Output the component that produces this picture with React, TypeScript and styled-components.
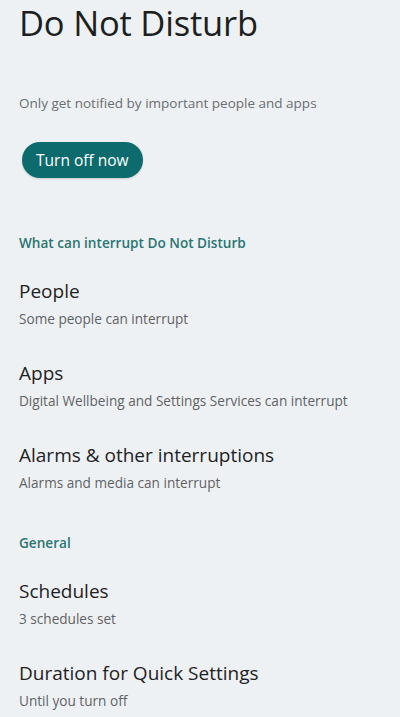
import React from 'react'
import styled, { createGlobalStyle } from 'styled-components'

const GlobalStyle = createGlobalStyle`
  html, body {
    margin: 0;
    padding: 0;
    background: #eef1f3;
  }
  body {
    font-family: "Open Sans", "Noto Sans", sans-serif;
  }
`

type Item = { title: string; summary: string }

const interruptItems: Item[] = [
  { title: 'People', summary: 'Some people can interrupt' },
  { title: 'Apps', summary: 'Digital Wellbeing and Settings Services can interrupt' },
  { title: 'Alarms & other interruptions', summary: 'Alarms and media can interrupt' },
]

const generalItems: Item[] = [
  { title: 'Schedules', summary: '3 schedules set' },
  { title: 'Duration for Quick Settings', summary: 'Until you turn off' },
]

export default function App() {
  return (
    <>
      <GlobalStyle />
      <Page>
        <Title>Do Not Disturb</Title>
        <Intro>Only get notified by important people and apps</Intro>
        <ButtonRow>
          <TurnOffButton>Turn off now</TurnOffButton>
        </ButtonRow>

        <Category $gap={56}>What can interrupt Do Not Disturb</Category>
        {interruptItems.map((item) => (
          <Preference key={item.title}>
            <PrefTitle>{item.title}</PrefTitle>
            <PrefSummary>{item.summary}</PrefSummary>
          </Preference>
        ))}

        <Category $gap={36}>General</Category>
        {generalItems.map((item) => (
          <Preference key={item.title}>
            <PrefTitle>{item.title}</PrefTitle>
            <PrefSummary>{item.summary}</PrefSummary>
          </Preference>
        ))}
      </Page>
    </>
  )
}

const Page = styled.main`
  display: flex;
  flex-direction: column;
  padding: 0 19px;
  height: 717px;
  overflow: hidden;
  box-sizing: border-box;
`

const Title = styled.h1`
  margin: 0;
  padding-top: 1px;
  font-size: 34.5px;
  font-weight: 400;
  line-height: 44px;
  letter-spacing: -0.2px;
  color: #1c1f21;
`

const Intro = styled.p`
  margin: 48px 0 0;
  font-size: 13.5px;
  line-height: 20px;
  color: #6a6e71;
`

const ButtonRow = styled.div`
  display: flex;
  margin-top: 29px;
  padding-left: 3px;
`

const TurnOffButton = styled.button`
  height: 36px;
  padding: 0 14px;
  border: none;
  border-radius: 18px;
  background: #0d6b6d;
  color: #ffffff;
  font-family: inherit;
  font-size: 15.5px;
  font-weight: 500;
  box-shadow: 0 1px 2px rgba(0, 0, 0, 0.15);
`

const Category = styled.h2<{ $gap: number }>`
  margin: ${(p) => p.$gap}px 0 0;
  font-size: 13.6px;
  font-weight: 600;
  line-height: 18px;
  color: #2a7573;
`

const Preference = styled.div`
  display: flex;
  flex-direction: column;
  padding-top: 27px;
  padding-bottom: 6px;
`

const PrefTitle = styled.div`
  font-size: 19px;
  line-height: 24px;
  color: #1f2224;
`

const PrefSummary = styled.div`
  margin-top: 7px;
  font-size: 13.6px;
  line-height: 18px;
  color: #5f6366;
`
